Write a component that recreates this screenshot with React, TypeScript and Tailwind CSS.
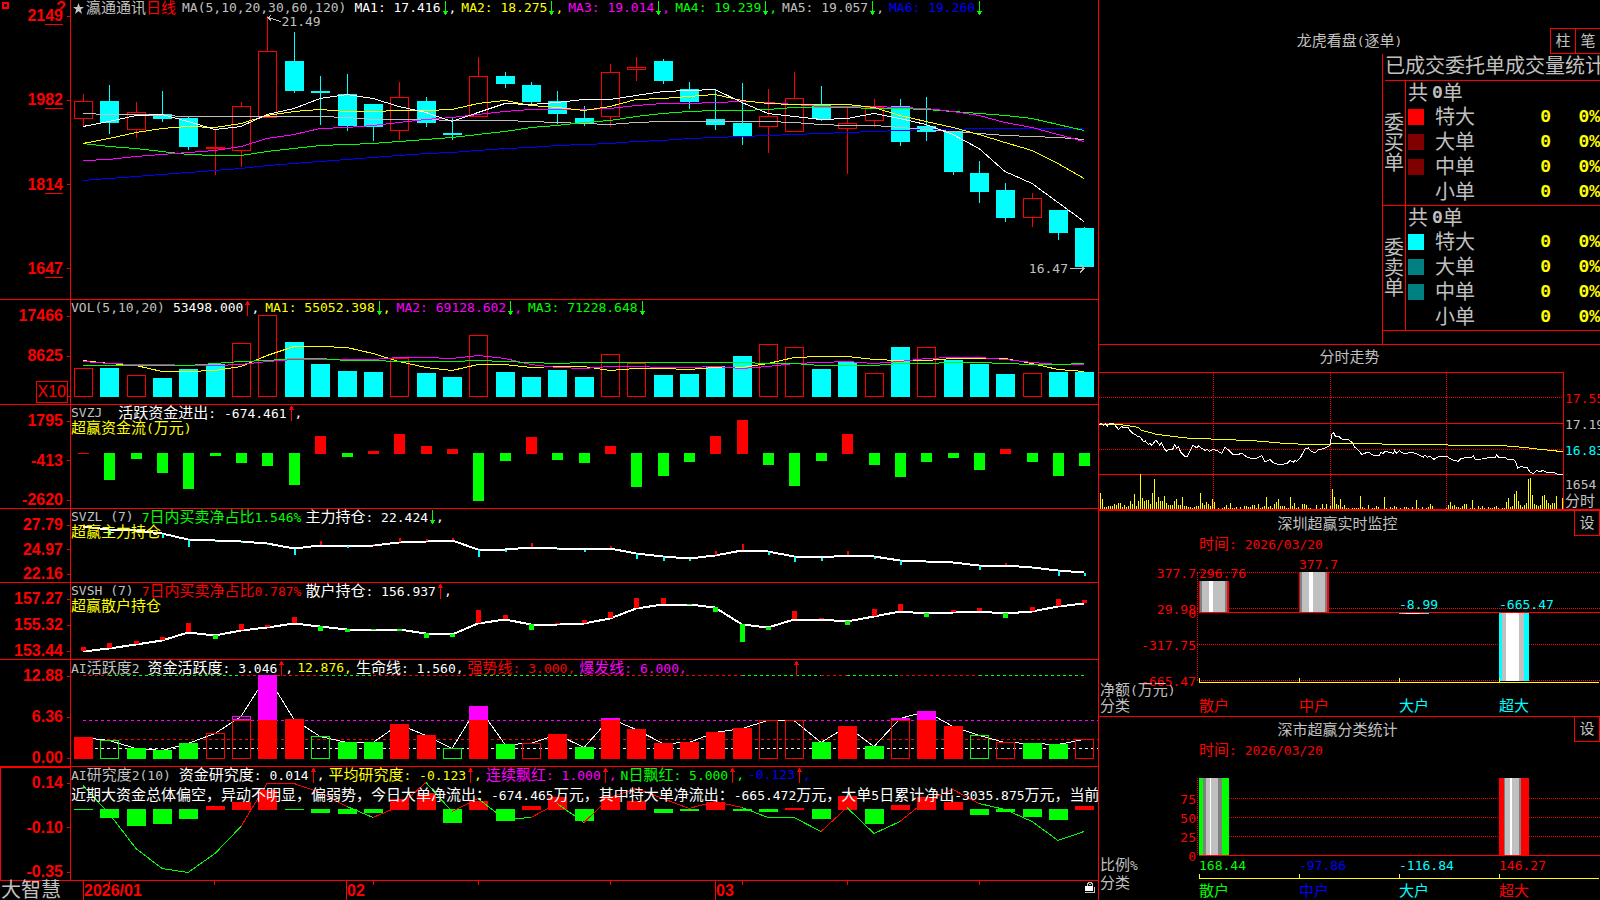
import type { ReactNode } from "react";

const RED = "#ff0000";
const GREEN = "#00ff00";
const CYAN = "#00ffff";
const YELLOW = "#ffff00";
const MAGENTA = "#ff00ff";
const SILVER = "#c0c0c0";
const BLUE = "#0000ff";
const WHITE = "#ffffff";

const FONT = "font-['DejaVu_Sans_Mono','Noto_Sans_CJK_SC',monospace]";
const AXIS_FONT = "font-['Liberation_Sans','Noto_Sans_CJK_SC',sans-serif]";

// center of the n-th trading day
const cx = (i: number) => Math.round(83 + 26.35 * i);

type Point = [number, number];

const CANDLES: [string, number, number, number, number][] = [
  // direction, high, body top, body bottom, low
  ["u", 94, 101, 118, 127],
  ["d", 85, 101, 123, 134],
  ["u", 102, 112, 129, 138],
  ["d", 91, 114, 119, 122],
  ["d", 117, 118, 147, 150],
  ["u", 129, 147, 148, 175],
  ["u", 102, 106, 150, 167],
  ["u", 16, 51, 117, 117],
  ["d", 32, 61, 91, 93],
  ["d", 76, 91, 93, 125],
  ["d", 74, 94, 126, 131],
  ["d", 104, 104, 127, 141],
  ["u", 82, 97, 130, 140],
  ["d", 97, 101, 123, 127],
  ["d", 118, 133, 135, 140],
  ["u", 57, 76, 116, 116],
  ["d", 72, 76, 84, 88],
  ["d", 82, 85, 102, 105],
  ["d", 91, 101, 114, 124],
  ["d", 106, 118, 124, 126],
  ["u", 64, 72, 116, 127],
  ["u", 57, 67, 69, 81],
  ["d", 59, 61, 81, 84],
  ["d", 82, 89, 102, 109],
  ["d", 89, 119, 125, 130],
  ["d", 83, 123, 136, 145],
  ["u", 89, 116, 126, 153],
  ["u", 72, 98, 131, 131],
  ["d", 86, 105, 119, 121],
  ["u", 107, 123, 128, 174],
  ["u", 99, 107, 120, 127],
  ["d", 99, 106, 142, 146],
  ["d", 97, 126, 132, 141],
  ["d", 131, 131, 172, 175],
  ["d", 161, 173, 192, 203],
  ["d", 183, 190, 218, 222],
  ["u", 193, 198, 217, 227],
  ["d", 210, 210, 233, 240],
  ["d", 227, 228, 267, 267],
];

const MA5 = [126, 121, 115, 114, 121, 129, 126, 114, 108, 98, 94, 98, 106, 112, 121, 112, 103, 104, 102, 99, 99, 95, 91, 90, 89, 102, 113, 116, 119, 118, 113, 118, 124, 134, 148, 171, 183, 202, 221];
const MA10 = [143, 138, 132, 128, 126, 127, 123, 115, 111, 109, 111, 111, 110, 110, 109, 103, 100, 105, 107, 110, 106, 99, 98, 96, 94, 100, 103, 104, 104, 104, 107, 115, 121, 127, 134, 142, 150, 163, 178];
const MA20 = [160, 159, 156, 154, 152, 150, 146, 138, 134, 128, 127, 125, 122, 119, 117, 114, 111, 109, 109, 109, 108, 105, 103, 103, 102, 101, 102, 104, 106, 106, 106, 107, 108, 111, 115, 122, 127, 134, 141];
const MA30 = [143, 146, 148, 151, 154, 155, 155, 151, 148, 145, 144, 143, 141, 139, 137, 134, 131, 127, 125, 122, 120, 116, 113, 111, 110, 110, 109, 107, 107, 107, 108, 108, 109, 111, 113, 115, 118, 124, 130];
const MA60 = [113, 114, 114, 115, 116, 116, 116, 116, 116, 116, 117, 119, 119, 119, 120, 120, 120, 121, 122, 123, 124, 122, 121, 121, 121, 121, 121, 122, 124, 125, 125, 127, 129, 131, 133, 135, 136, 137, 139];
const MA120 = [180, 178, 176, 174, 172, 170, 168, 165, 163, 161, 159, 157, 155, 153, 152, 150, 148, 147, 145, 144, 143, 141, 140, 138, 137, 136, 135, 134, 133, 132, 131, 130, 129, 129, 128, 128, 128, 128, 128];

const VOLUME = [368, 368, 375, 378, 369, 364, 343, 315, 342, 364, 371, 372, 358, 373, 377, 335, 372, 377, 370, 377, 354, 363, 375, 374, 366, 356, 344, 347, 369, 362, 373, 347, 347, 360, 364, 374, 373, 372, 372];
// volume bars are hollow on these days
const VOLUME_UP = [0, 2, 6, 7, 12, 15, 20, 21, 26, 27, 30, 32, 36];
const VMA5 = [360, 363, 365, 371, 371, 370, 366, 355, 346, 346, 347, 353, 361, 367, 370, 364, 364, 367, 366, 366, 370, 368, 368, 369, 367, 367, 363, 357, 356, 356, 359, 360, 360, 358, 358, 358, 363, 369, 371];
const VMA10 = [361, 363, 364, 364, 365, 365, 364, 361, 359, 359, 359, 359, 357, 357, 358, 355, 358, 364, 367, 368, 366, 366, 367, 367, 366, 368, 366, 363, 362, 361, 363, 361, 358, 357, 357, 359, 362, 364, 364];
const VMA20 = [365, 365, 365, 365, 365, 363, 361, 360, 358, 358, 360, 360, 361, 361, 361, 360, 361, 362, 363, 362, 362, 362, 362, 362, 362, 362, 363, 363, 365, 365, 365, 363, 363, 362, 362, 363, 364, 364, 363];

const FLOW = [1, -27, -6, -20, -36, -3, -10, -13, -32, 18, -4, 3, 20, 8, 5, -48, -8, 17, -7, -10, 8, -34, -23, -9, 18, 34, -12, -33, -8, 20, -12, -24, -9, -5, -17, 5, -9, -23, -13];

const MAIN_HOLD = [526, 529, 530, 533, 539, 540, 541, 543, 548, 545, 545, 545, 542, 541, 540, 549, 549, 547, 548, 549, 548, 553, 556, 558, 555, 550, 551, 556, 557, 555, 556, 560, 561, 562, 565, 565, 567, 570, 572];
const MAIN_TICKS = [2, -5, 0, -4, -7, -1, -1, -1, -6, 4, -2, 1, 4, 2, 2, -7, -2, 4, -1, -2, 2, -5, -4, -2, 4, 6, -3, -5, -3, 4, -2, -4, -1, 0, -4, 2, -1, -5, -3];

const RETAIL_HOLD = [651, 648, 644, 640, 632, 635, 630, 627, 623, 626, 629, 629, 629, 633, 634, 623, 619, 624, 624, 623, 618, 608, 604, 604, 607, 624, 627, 619, 619, 621, 616, 611, 613, 612, 611, 613, 611, 606, 603];
const RETAIL_TICKS = [4, 5, 3, 3, 9, -4, 6, 2, 6, -5, -3, -1, -2, -5, -3, 13, 4, -6, 1, 3, 6, 10, 6, -1, -5, -18, -3, 8, 1, -4, 7, 7, -4, 2, 3, -5, 4, 7, 3];

const ACTIVE: [string, number, number?][] = [
  // fill (upper case: solid), top, top of the magenta part
  ["R", 737], ["g", 740], ["G", 748], ["G", 750], ["G", 743], ["r", 733], ["r", 720, 716],
  ["R", 720, 675], ["R", 719, 719], ["g", 736], ["G", 742], ["G", 742], ["R", 724], ["R", 735],
  ["g", 748], ["R", 720, 706], ["G", 744], ["r", 743], ["R", 734], ["G", 747], ["R", 720, 718],
  ["R", 729], ["R", 743], ["R", 742], ["R", 732], ["R", 728], ["r", 720], ["r", 720],
  ["G", 742], ["R", 726], ["G", 746], ["r", 720, 718], ["R", 720, 711], ["R", 726], ["g", 735],
  ["r", 742], ["G", 743], ["G", 744], ["r", 739],
];
const TOP_DASHES: [number, number, string][] = [
  [0, 1, RED], [1, 6, GREEN], [6, 9, RED], [9, 11, GREEN], [11, 15, RED], [15, 19, GREEN],
  [19, 25, RED], [25, 28, GREEN], [28, 29, RED], [29, 31, GREEN], [31, 34, RED], [34, 38, GREEN],
];

const STUDY = [-1, -9, -17, -15, -10, 4, 8, 20, -1, -4, -5, -4, 11, 17, -14, 9, -12, 4, 13, -12, 14, 9, -4, -2, 8, -2, -3, 2, -10, 14, -15, 5, 13, 8, -6, -3, -8, -11, 4];
const STUDY_LINE = [785, 813, 848, 868, 872, 853, 826, 783, 783, 792, 806, 817, 806, 782, 811, 798, 819, 817, 803, 822, 797, 788, 798, 808, 801, 807, 817, 817, 831, 807, 833, 821, 800, 789, 803, 809, 821, 840, 831];
const STUDY_COLORS = "GGGGGGRRRRGRRGRGGRGRRRRRRGGGRGGRRRGGGG";

const line = (ys: number[]) => ys.map((y, i) => `${cx(i)},${y + 0.5}`).join(" ");

function Curve({ ys, color, width = 1 }: { ys: number[]; color: string; width?: number }) {
  return <polyline points={line(ys)} fill="none" stroke={color} strokeWidth={width} />;
}

function Bar({ x, y, w, h, color, hollow }: { x: number; y: number; w: number; h: number; color: string; hollow?: boolean }) {
  if (hollow) {
    return <rect x={x + 0.5} y={y + 0.5} width={w - 1} height={Math.max(h - 1, 1)} fill="none" stroke={color} />;
  }
  return <rect x={x} y={y} width={w} height={h} fill={color} />;
}

/* Chinese runs are set larger than digits and latin letters */
function T({ children, className = "" }: { children: string; className?: string }) {
  const runs = children.split(/([\u3000-\u9fff\uff00-\uffef]+)/).filter(Boolean);
  return (
    <span className={`whitespace-pre ${className}`}>
      {runs.map((r, i) =>
        /[\u3000-\uffef]/.test(r) ? (
          <span key={i} className="text-[15px]">{r}</span>
        ) : (
          r
        )
      )}
    </span>
  );
}

function Arrow({ up }: { up?: boolean }) {
  return (
    <svg width="8" height="15" viewBox="0 0 8 15" className="shrink-0" shapeRendering="crispEdges">
      {up ? (
        <path d="M4 0H5V1H6V3H7V4H5V15H4V4H2V3H3V1H4Z" fill={RED} />
      ) : (
        <path d="M4 0H5V10H7V11H6V13H5V14H4V13H3V11H2V10H4Z" fill={GREEN} />
      )}
    </svg>
  );
}

function Item({ text, arrow, end = ",", className }: { text: string; arrow?: "up" | "down"; end?: string; className: string }) {
  return (
    <span className={`flex shrink-0 items-center ${className}`}>
      <T>{text}</T>
      {arrow && <Arrow up={arrow === "up"} />}
      {end && <T>{end}</T>}
    </span>
  );
}

function Axis({ labels, underline, selected, children }: { labels: string[]; underline?: boolean; selected?: boolean; children?: ReactNode }) {
  return (
    <div
      className={`relative flex w-[71px] shrink-0 flex-col justify-between border-r border-[#ff0000] text-right text-base font-bold leading-4 text-[#ff0000] ${AXIS_FONT} ${
        underline ? "pb-[22px]" : ""
      } ${selected ? "border-l border-t pt-[7px]" : "pt-2"}`}
    >
      {labels.map((l, i) => (
        <div key={i} className="flex h-4 items-center justify-end gap-1">
          {underline ? (
            <span>
              {l.slice(0, 2)}
              <span className="border-b border-[#ff0000]">{l.slice(2)}</span>
            </span>
          ) : (
            <span>{l}</span>
          )}
          <span className="w-[3px] border-t border-[#ff0000]" />
        </div>
      ))}
      {children}
    </div>
  );
}

function Panel({ axis, top, height, header, chart, children }: { axis: ReactNode; top: number; height: number; header: ReactNode; chart: ReactNode; children?: ReactNode }) {
  return (
    <section className="flex min-h-0 overflow-hidden border-b border-[#ff0000]">
      {axis}
      <div className="relative min-w-0 flex-1 overflow-hidden">
        <svg
          className="absolute inset-0 h-full w-full"
          viewBox={`71 ${top} 1027 ${height}`}
          preserveAspectRatio="none"
          shapeRendering="crispEdges"
        >
          {chart}
        </svg>
        <div className="relative flex h-4 items-center gap-1 overflow-hidden">{header}</div>
        {children}
      </div>
    </section>
  );
}

function KLine() {
  return (
    <Panel
      top={0}
      height={299}
      axis={
        <Axis labels={["2149", "1982", "1814", "1647"]} underline>
          <span className="absolute left-[2px] top-[2px] h-[7px] w-[7px] border-2 border-[#ff0000]" />
          <button className="absolute right-1 top-0 font-bold leading-4" aria-label="help">?</button>
        </Axis>
      }
      header={
        <>
          <span className="flex items-center text-[#c0c0c0]">
            <svg width="11" height="11" viewBox="0 0 11 11" className="mx-0.5"><path d="M5.500 0L7 4H11L7.800 6.500L9 11L5.500 8.200L2 11L3.200 6.500L0 4H4Z" fill={SILVER} /></svg>
            <T>瀛通通讯</T>
            <T className="text-[#ff0000]">日线</T>
          </span>
          <T className="ml-0.5 mr-1 text-[#c0c0c0]">MA(5,10,20,30,60,120)</T>
          <div className="flex gap-[5px]">
            <Item text="MA1: 17.416" arrow="down" className="text-white" />
            <Item text="MA2: 18.275" arrow="down" className="text-[#ffff00]" />
            <Item text="MA3: 19.014" arrow="down" className="text-[#ff00ff]" />
            <Item text="MA4: 19.239" arrow="down" className="text-[#00ff00]" />
            <Item text="MA5: 19.057" arrow="down" className="text-[#c0c0c0]" />
            <Item text="MA6: 19.260" arrow="down" end="" className="text-[#0000ff]" />
          </div>
        </>
      }
      chart={
        <>
          {CANDLES.map(([dir, high, top, bottom, low], i) => {
            const x = cx(i);
            const color = dir === "u" ? RED : CYAN;
            return (
              <g key={i}>
                <path d={`M${x + 0.5} ${high}V${top}M${x + 0.5} ${bottom}V${low}`} stroke={color} />
                <Bar x={x - 9} y={top} w={19} h={dir === "u" ? bottom - top + 1 : bottom - top} color={color} hollow={dir === "u"} />
              </g>
            );
          })}
          <Curve ys={MA120} color={BLUE} />
          <Curve ys={MA60} color={SILVER} />
          <Curve ys={MA30} color={GREEN} />
          <Curve ys={MA20} color={MAGENTA} />
          <Curve ys={MA10} color={YELLOW} />
          <Curve ys={MA5} color={WHITE} />
          <path d="M281 21.500L268 17.500M271 15.500L268 17.500L271 20.500" stroke={SILVER} fill="none" />
          <path d="M1070 268.500H1084M1080 264.500L1084 268.500L1080 272.500" stroke={SILVER} fill="none" />
        </>
      }
    >
      <T className="absolute left-[20.5%] top-[14px] text-[#c0c0c0]">21.49</T>
      <T className="absolute right-[30px] top-[261px] text-[#c0c0c0]">16.47</T>
    </Panel>
  );
}

function Volume() {
  return (
    <Panel
      top={300}
      height={104}
      axis={
        <Axis labels={["17466", "8625", ""]}>
          <span className="absolute bottom-[1px] right-[2px] border border-[#ff0000] px-px py-[2px] font-normal">X10</span>
        </Axis>
      }
      header={
        <>
          <T className="mr-1 text-[#c0c0c0]">VOL(5,10,20)</T>
          <div className="flex gap-1.5">
            <Item text="53498.000" arrow="up" className="text-white" />
            <Item text="MA1: 55052.398" arrow="down" className="text-[#ffff00]" />
            <Item text="MA2: 69128.602" arrow="down" className="text-[#ff00ff]" />
            <Item text="MA3: 71228.648" arrow="down" end="" className="text-[#00ff00]" />
          </div>
        </>
      }
      chart={
        <>
          {VOLUME.map((y, i) => {
            const up = VOLUME_UP.includes(i);
            return <Bar key={i} x={cx(i) - 9} y={y} w={19} h={397 - y} color={up ? RED : CYAN} hollow={up} />;
          })}
          <Curve ys={VMA5} color={YELLOW} />
          <Curve ys={VMA10} color={MAGENTA} />
          <Curve ys={VMA20} color={GREEN} />
        </>
      }
    />
  );
}

function MoneyFlow() {
  return (
    <Panel
      top={405}
      height={103}
      axis={<Axis labels={["1795", "-413", "-2620"]} />}
      header={
        <>
          <T className="mr-3 text-[#c0c0c0]">SVZJ</T>
          <Item text="活跃资金进出: -674.461" arrow="up" className="text-white" />
        </>
      }
      chart={FLOW.map((v, i) => (
        <Bar key={i} x={cx(i) - 5} y={v > 0 ? 454 - v : 453} w={11} h={Math.abs(v)} color={v > 0 ? RED : GREEN} />
      ))}
    >
      <div className="relative leading-[15px] text-[#ffff00]"><T>超赢资金流(万元)</T></div>
    </Panel>
  );
}

function MainHolding() {
  return (
    <Panel
      top={509}
      height={73}
      axis={<Axis labels={["27.79", "24.97", "22.16"]} />}
      header={
        <>
          <T className="mr-1 text-[#c0c0c0]">SVZL (7)</T>
          <T className="text-[#00ff00]">7日内买卖净占比1.546%</T>
          <Item text="主力持仓: 22.424" arrow="down" className="text-white" />
        </>
      }
      chart={
        <>
          <Curve ys={MAIN_HOLD} color={WHITE} width={2} />
          {MAIN_TICKS.map((v, i) => (
            <Bar key={i} x={cx(i)} y={v > 0 ? MAIN_HOLD[i] - v : MAIN_HOLD[i] + 1} w={2} h={Math.abs(v)} color={v > 0 ? RED : CYAN} />
          ))}
        </>
      }
    >
      <div className="relative leading-[15px] text-[#ffff00]"><T>超赢主力持仓</T></div>
    </Panel>
  );
}

function RetailHolding() {
  return (
    <Panel
      top={583}
      height={76}
      axis={<Axis labels={["157.27", "155.32", "153.44"]} />}
      header={
        <>
          <T className="mr-1 text-[#c0c0c0]">SVSH (7)</T>
          <T className="text-[#ff0000]">7日内买卖净占比0.787%</T>
          <Item text="散户持仓: 156.937" arrow="up" className="text-white" />
        </>
      }
      chart={
        <>
          <Curve ys={RETAIL_HOLD} color={WHITE} width={2} />
          {RETAIL_TICKS.map((v, i) => (
            <Bar key={i} x={cx(i) - 2} y={v > 0 ? RETAIL_HOLD[i] - v : RETAIL_HOLD[i]} w={5} h={Math.abs(v)} color={v > 0 ? RED : GREEN} />
          ))}
        </>
      }
    >
      <div className="relative leading-[15px] text-[#ffff00]"><T>超赢散户持仓</T></div>
    </Panel>
  );
}

function Activity() {
  return (
    <Panel
      top={660}
      height={106}
      axis={<Axis labels={["12.88", "6.36", "0.00"]} />}
      header={
        <>
          <T className="mr-1 text-[#c0c0c0]">AI活跃度2</T>
          <Item text="资金活跃度: 3.046" arrow="up" className="text-white" />
          <Item text="12.876" className="text-[#ffff00]" />
          <Item text="生命线: 1.560" className="text-white" />
          <Item text="强势线: 3.000" className="text-[#ff0000]" />
          <Item text="爆发线: 6.000" className="text-[#ff00ff]" />
          <span className="ml-[101px] flex"><Arrow up /></span>
        </>
      }
      chart={
        <>
          {TOP_DASHES.map(([a, b, color]) => (
            <path key={a} d={`M${cx(a)} 675.500H${cx(b)}`} stroke={color} strokeDasharray="3 3" />
          ))}
          <path d="M83 720.500H1098" stroke={MAGENTA} strokeDasharray="3 3" />
          <path d="M83 739.500H1098" stroke={RED} strokeDasharray="3 3" />
          <path d="M83 748.500H1098" stroke={WHITE} strokeDasharray="3 3" />
          <Curve ys={ACTIVE.map(([, top, peak]) => peak ?? top)} color={WHITE} />
          {ACTIVE.map(([kind, top, peak], i) => {
            const hollow = kind === kind.toLowerCase();
            const color = kind.toUpperCase() === "R" ? RED : GREEN;
            return (
              <g key={i}>
                {peak && <Bar x={cx(i) - 9} y={peak} w={19} h={Math.max(top - peak, 1)} color={MAGENTA} hollow={hollow} />}
                <Bar x={cx(i) - 9} y={top} w={19} h={759 - top} color={color} hollow={hollow} />
              </g>
            );
          })}
        </>
      }
    />
  );
}

function Study() {
  return (
    <Panel
      top={767}
      height={113}
      axis={<Axis labels={["0.14", "-0.10", "-0.35"]} selected />}
      header={
        <>
          <T className="mr-1 text-[#c0c0c0]">AI研究度2(10)</T>
          <Item text="资金研究度: 0.014" arrow="up" className="text-white" />
          <Item text="平均研究度: -0.123" arrow="up" className="text-[#ffff00]" />
          <Item text="连续飘红: 1.000" arrow="up" className="text-[#ff00ff]" />
          <Item text="N日飘红: 5.000" arrow="up" className="text-[#00ff00]" />
          <Item text="-0.123" arrow="up" className="text-[#0000ff]" />
        </>
      }
      chart={
        <>
          {STUDY.map((v, i) => (
            <Bar key={i} x={cx(i) - 9} y={v > 0 ? 810 - v : 809} w={19} h={Math.abs(v)} color={v > 0 ? RED : GREEN} />
          ))}
          {STUDY_COLORS.split("").map((c, i) => (
            <path
              key={i}
              d={`M${cx(i)} ${STUDY_LINE[i] + 0.5}L${cx(i + 1)} ${STUDY_LINE[i + 1] + 0.5}`}
              stroke={c === "R" ? RED : GREEN}
            />
          ))}
        </>
      }
    >
      <p className="relative mt-1 overflow-hidden whitespace-nowrap leading-4 text-white">
        <T>近期大资金总体偏空，异动不明显，偏弱势，今日大单净流出：-674.465万元，其中特大单净流出：-665.472万元，大单5日累计净出-3035.875万元，当前</T>
      </p>
    </Panel>
  );
}

const MONTHS: [number, string][] = [[83, "2026/01"], [346, "02"], [715, "03"]];
const WEEKS = [109, 214, 373, 478, 610, 742, 847, 979];

function TimeAxis() {
  return (
    <footer className="flex min-h-0">
      <div className={`w-[71px] shrink-0 pl-px text-xl leading-[19px] text-[#c0c0c0] ${FONT}`}>大智慧</div>
      <div className={`relative min-w-0 flex-1 text-base leading-[19px] text-[#ff0000] ${AXIS_FONT}`}>
        <svg className="absolute inset-0 h-full w-full" viewBox="71 881 1027 19" preserveAspectRatio="none" shapeRendering="crispEdges">
          {MONTHS.map(([x]) => <path key={x} d={`M${x + 0.5} 881V900`} stroke={RED} />)}
          {WEEKS.map((x) => <path key={x} d={`M${x + 0.5} 881V885`} stroke={RED} />)}
        </svg>
        {MONTHS.map(([x, label]) => (
          <span key={x} className="absolute top-0 font-bold" style={{ left: `${((x - 70) / 1027) * 100}%` }}>{label}</span>
        ))}
        <svg className="absolute right-[2px] top-[1px]" width="11" height="11" viewBox="0 0 11 11" shapeRendering="crispEdges">
          <path d="M2.500 4V1.500H3.500V0.500H6.500V1.500H7.500V4" stroke={SILVER} fill="none" />
          <path d="M4 2.500H6" stroke={SILVER} />
          <rect x="0" y="4" width="8" height="5" fill={WHITE} />
          <path d="M0 10.500H9.500V5" stroke={SILVER} fill="none" />
        </svg>
      </div>
    </footer>
  );
}

const ORDER_GROUPS = [
  { name: "委买单", swatches: ["bg-[#ff0000]", "bg-[#800000]", "bg-[#800000]", ""] },
  { name: "委卖单", swatches: ["bg-[#00ffff]", "bg-[#008080]", "bg-[#008080]", ""] },
];
const ORDER_ROWS = ["特大", "大单", "中单", "小单"];

function OrderBook() {
  return (
    <section className="flex min-h-0 flex-col border-b border-[#ff0000]">
      <div className="relative flex h-[54px] shrink-0 items-end justify-center pb-[3px] text-[#c0c0c0]">
        <h2 className="leading-[18px]"><T>龙虎看盘(逐单)</T></h2>
        <div className="absolute bottom-0 right-0 flex h-[26px] border-y border-l border-[#ff0000]">
          <button className="w-[25px] border-r border-[#ff0000]"><T>柱</T></button>
          <button className="w-6"><T>笔</T></button>
        </div>
      </div>
      <div className="ml-auto w-[218px] flex-1 overflow-hidden border-l border-[#ff0000] text-xl text-[#c0c0c0]">
        <h3 className="ml-0.5 h-[27px] whitespace-nowrap border-b border-[#ff0000] leading-[25px]">已成交委托单成交量统计</h3>
        <table className="w-full table-fixed border-separate border-spacing-0 leading-5">
          <colgroup>
            <col className="w-[23px]" />
            <col className="w-[29px]" />
            <col />
            <col className="w-[39px]" />
            <col className="w-[49px]" />
          </colgroup>
          {ORDER_GROUPS.map((g) => (
            <tbody key={g.name}>
              <tr>
                <th rowSpan={5} scope="rowgroup" className="border-b border-r border-[#ff0000] p-0 text-center align-middle font-normal">
                  {g.name.split("").map((c) => <span key={c} className="block">{c}</span>)}
                </th>
                <td colSpan={4} className="h-6 p-0 pl-[2px]">
                  <span className="flex items-center">
                    共<b className="pl-1 font-['Liberation_Mono'] text-lg leading-5">0</b>单
                  </span>
                </td>
              </tr>
              {ORDER_ROWS.map((r, i) => {
                const edge = i === 3 ? "h-[26px] border-b border-[#ff0000]" : "h-[25px]";
                return (
                  <tr key={r}>
                    <td className={`p-0 pb-0.5 pl-[2px] ${edge}`}>
                      <span className={`block h-4 w-4 ${g.swatches[i]}`} />
                    </td>
                    <td className={`p-0 pb-0.5 ${edge}`}>{r}</td>
                    <td className={`p-0 pb-0.5 text-right font-['Liberation_Mono'] text-lg font-bold leading-5 text-[#ffff00] ${edge}`}>0</td>
                    <td className={`p-0 pb-0.5 text-right font-['Liberation_Mono'] text-lg font-bold leading-5 text-[#ffff00] ${edge}`}>0%</td>
                  </tr>
                );
              })}
            </tbody>
          ))}
        </table>
      </div>
    </section>
  );
}

// minute chart, three units to a pixel
const PRICE: Point[] = [
  [27, 253], [34, 250], [40, 257], [46, 252], [52, 258], [58, 250], [70, 250], [78, 259], [85, 268], [95, 260], [105, 264], [114, 262],
  [120, 272], [130, 281], [142, 288], [150, 290], [160, 304], [166, 303], [175, 313], [180, 309], [185, 317], [197, 301], [204, 308], [209, 315], [214, 309],
  [222, 325], [230, 333], [240, 327], [248, 328], [254, 314], [260, 326], [265, 320], [272, 336], [285, 350], [293, 348], [300, 332],
  [308, 316], [320, 323], [326, 318], [332, 323], [345, 331], [352, 328], [358, 334], [370, 328], [382, 332], [395, 341], [405, 322],
  [418, 332], [430, 345], [445, 343], [456, 340], [470, 351], [490, 357], [505, 353], [515, 346], [525, 366], [540, 359], [550, 368],
  [565, 374], [590, 371], [600, 361], [610, 367], [616, 361], [620, 364], [630, 355], [645, 327], [655, 324], [664, 335], [676, 338], [685, 329],
  [700, 326], [710, 322], [718, 318], [722, 310], [724, 284], [730, 277], [736, 288], [748, 290], [755, 297], [775, 299], [785, 306],
  [795, 322], [806, 331], [815, 343], [835, 336], [850, 346], [868, 346], [872, 337], [880, 341], [884, 334], [900, 337], [910, 340],
  [914, 331], [920, 340], [928, 332], [940, 340], [970, 338], [985, 344], [1000, 351], [1005, 345], [1012, 352], [1020, 349],
  [1032, 358], [1044, 351], [1060, 350], [1070, 348], [1080, 356], [1092, 361], [1104, 364], [1112, 356], [1118, 357], [1125, 351],
  [1145, 353], [1150, 346], [1156, 358], [1175, 357], [1200, 352], [1216, 352], [1220, 344], [1226, 352], [1245, 352], [1256, 360],
  [1268, 358], [1276, 363], [1283, 384], [1294, 380], [1312, 383], [1320, 396], [1330, 401], [1340, 391], [1350, 396], [1358, 391], [1370, 397],
  [1394, 398], [1400, 402], [1419, 403],
];
const AVERAGE: Point[] = [
  [27, 252], [90, 254], [120, 258], [145, 262], [155, 271], [200, 283], [240, 288], [290, 294], [410, 299],
  [490, 302], [570, 309], [640, 313], [720, 313], [724, 311], [870, 311], [880, 313], [1070, 314], [1080, 316],
  [1240, 317], [1310, 323], [1350, 328], [1419, 335],
];
const MINUTE_VOLUME = [
  16, 10, 2, 2, 3, 3, 3, 5, 4, 6, 6, 2, 4, 2, 3, 8, 5, 15, 3, 8, 35, 11, 8, 9, 9, 5, 16, 30, 7, 12, 8, 8, 13, 6, 4, 4,
  4, 8, 10, 4, 4, 12, 3, 3, 2, 2, 1, 2, 3, 3, 16, 6, 4, 7, 5, 3, 10, 7, 0, 1, 0, 1, 2, 4, 1, 6, 1, 1, 2, 0,
  2, 0, 3, 3, 2, 2, 4, 4, 1, 5, 1, 2, 3, 12, 2, 3, 1, 5, 7, 10, 3, 3, 3, 1, 1, 12, 3, 6, 1, 2, 0, 5, 5, 4,
  1, 1, 0, 0, 4, 0, 1, 5, 1, 5, 0, 3, 20, 12, 5, 4, 10, 2, 4, 1, 1, 0, 1, 1, 1, 1, 13, 2, 1, 0, 4, 0, 1, 1,
  3, 2, 0, 0, 12, 1, 0, 2, 1, 3, 2, 0, 1, 0, 2, 2, 1, 0, 2, 0, 9, 1, 0, 2, 0, 1, 2, 5, 3, 0, 0, 0, 0, 0,
  0, 1, 4, 7, 3, 4, 2, 2, 1, 3, 5, 5, 0, 1, 9, 1, 0, 3, 1, 3, 1, 0, 2, 1, 1, 2, 3, 1, 0, 1, 1, 7, 11, 2,
  3, 15, 18, 8, 4, 2, 4, 6, 30, 31, 14, 5, 4, 3, 4, 13, 14, 9, 6, 4, 6, 6, 13, 0, 0, 11,
];

function Minute() {
  const pts = (p: Point[]) => p.map(([x, y]) => `${1090 + x / 3},${340 + y / 3}`).join(" ");
  return (
    <section className="flex min-h-0 flex-col overflow-hidden border-b-2 border-[#ff0000]">
      <h2 className="h-[27px] shrink-0 text-center leading-[25px] text-[#c0c0c0]"><T>分时走势</T></h2>
      <svg className="min-h-0 w-full flex-1" viewBox="1099 372 501 137" preserveAspectRatio="xMinYMin meet" shapeRendering="crispEdges" fontSize="13">
        <path d="M1099 372.500H1563.500V509M1099 423.500H1563M1099 474.500H1563" stroke={RED} fill="none" />
        <path d="M1099 397.500H1563M1099 449.500H1563M1213.500 373V509M1330.500 373V509M1446.500 373V509" stroke={RED} strokeDasharray="1 1" fill="none" />
        {MINUTE_VOLUME.map((h, i) => <rect key={i} x={1100 + i * 2} y={509 - h} width="1" height={h} fill={YELLOW} />)}
        <polyline points={pts(AVERAGE)} stroke={YELLOW} fill="none" />
        <polyline points={pts(PRICE)} stroke={WHITE} fill="none" />
        <text x="1565" y="403" fill={RED}>17.55</text>
        <text x="1565" y="429" fill={SILVER}>17.19</text>
        <text x="1565" y="455" fill={CYAN}>16.83</text>
        <text x="1565" y="489" fill={SILVER}>1654</text>
        <text x="1565" y="506" fill={SILVER} fontSize="15">分时</text>
      </svg>
    </section>
  );
}

type Stripe = [number, string];
const GRAY = "#808080";
const GROUPS = ["散户", "中户", "大户", "超大"];

function Cylinder({ x, y, h, stripes }: { x: number; y: number; h: number; stripes: Stripe[] }) {
  let at = x;
  return (
    <g>
      {stripes.map(([w, color], i) => {
        const left = at;
        at += w;
        return <rect key={i} x={left} y={y} width={w} height={h} fill={color} />;
      })}
    </g>
  );
}

function StatPanel({ title, top, height, children }: { title: string; top: number; height: number; children: ReactNode }) {
  return (
    <section className="relative min-h-0 overflow-hidden">
      <svg className="absolute inset-0 h-full w-full" viewBox={`1099 ${top} 501 ${height}`} preserveAspectRatio="xMinYMin meet" shapeRendering="crispEdges" fontSize="13">
        {children}
      </svg>
      <h2 className="relative pt-1 text-center leading-[18px] text-[#c0c0c0]"><T className="mr-6">{title}</T></h2>
      <button className="absolute right-0 top-0 h-[25px] w-[26px] border-x border-b border-[#ff0000] text-[#c0c0c0]"><T>设</T></button>
      <p className="relative pl-[100px] leading-5 text-[#ff0000]"><T>时间: 2026/03/20</T></p>
    </section>
  );
}

const SOFT_RED: Stripe[] = [[1, RED], [2, GRAY], [7, SILVER], [4, WHITE], [12, SILVER], [2, GRAY], [2, RED]];
const SOFT_CYAN: Stripe[] = [[3, CYAN], [4, SILVER], [13, WHITE], [5, SILVER], [5, CYAN]];
const DEEP_GREEN: Stripe[] = [[4, GREEN], [3, GRAY], [4, SILVER], [1, WHITE], [7, SILVER], [4, GRAY], [7, GREEN]];
const DEEP_RED: Stripe[] = [[5, RED], [1, GRAY], [5, SILVER], [2, WHITE], [7, SILVER], [2, GRAY], [8, RED]];

function LiveMonitor() {
  return (
    <div className="grid min-h-0 border-b border-[#ff0000]">
      <StatPanel title="深圳超赢实时监控" top={511} height={205}>
        <path d="M1197 572.500H1600M1197 608.500H1600M1197 644.500H1600M1197 680.500H1600M1197.500 573V680" stroke={RED} strokeDasharray="1 1" />
        <Cylinder x={1199} y={581} h={31} stripes={SOFT_RED} />
        <Cylinder x={1299} y={572} h={40} stripes={SOFT_RED} />
        <Cylinder x={1399} y={613} h={1} stripes={SOFT_CYAN} />
        <Cylinder x={1499} y={613} h={68} stripes={SOFT_CYAN} />
        <path d="M1199 612.500H1600" stroke={RED} />
        <path d="M1199.500 678V682.500H1599M1299.500 678V682M1399.500 678V682M1499.500 678V682" stroke={YELLOW} fill="none" />
        <g fill={RED} textAnchor="end">
          <text x="1196" y="578">377.7</text>
          <text x="1196" y="614">29.98</text>
          <text x="1196" y="618">0</text>
          <text x="1196" y="650">-317.75</text>
          <text x="1196" y="686">-665.47</text>
        </g>
        <text x="1199" y="578" fill={RED}>296.76</text>
        <text x="1299" y="569" fill={RED}>377.7</text>
        <text x="1399" y="609" fill={CYAN}>-8.99</text>
        <text x="1499" y="609" fill={CYAN}>-665.47</text>
        <g fontSize="15" fill={SILVER}>
          <text x="1100" y="695">净额<tspan fontSize="13">(</tspan>万元<tspan fontSize="13">)</tspan></text>
          <text x="1100" y="711">分类</text>
          {GROUPS.map((g, i) => <text key={g} x={1199 + i * 100} y="711" fill={i < 2 ? RED : CYAN}>{g}</text>)}
        </g>
      </StatPanel>
    </div>
  );
}

function MarketStats() {
  const colors = [GREEN, BLUE, CYAN, RED];
  const values = ["168.44", "-97.86", "-116.84", "146.27"];
  return (
    <StatPanel title="深市超赢分类统计" top={717} height={183}>
      <path d="M1197 798.500H1600M1197 817.500H1600M1197 836.500H1600M1197.500 778V855" stroke={RED} strokeDasharray="1 1" />
      <Cylinder x={1199} y={778} h={77} stripes={DEEP_GREEN} />
      <Cylinder x={1499} y={778} h={77} stripes={DEEP_RED} />
      <path d="M1199 855.500H1600" stroke={RED} />
      <path d="M1199.500 874V878.500H1599M1299.500 874V878M1399.500 874V878M1499.500 874V878" stroke={YELLOW} fill="none" />
      <g fill={RED} textAnchor="end">
        <text x="1196" y="804">75</text>
        <text x="1196" y="823">50</text>
        <text x="1196" y="842">25</text>
        <text x="1196" y="861">0</text>
      </g>
      {values.map((v, i) => <text key={v} x={1199 + i * 100} y="870" fill={colors[i]}>{v}</text>)}
      <g fontSize="15" fill={SILVER}>
        <text x="1100" y="870">比例<tspan fontSize="13">%</tspan></text>
        <text x="1100" y="888">分类</text>
        {GROUPS.map((g, i) => <text key={g} x={1199 + i * 100} y="896" fill={colors[i]}>{g}</text>)}
      </g>
    </StatPanel>
  );
}

export default function App() {
  return (
    <div className={`flex h-screen min-h-[600px] overflow-hidden bg-black text-[13px] leading-4 ${FONT}`}>
      {/* indicator panels */}
      <main className="grid min-w-0 flex-1 grid-rows-[300fr_105fr_104fr_74fr_77fr_107fr_114fr_19fr]">
        <KLine />
        <Volume />
        <MoneyFlow />
        <MainHolding />
        <RetailHolding />
        <Activity />
        <Study />
        <TimeAxis />
      </main>
      {/* order statistics */}
      <aside className="grid w-[502px] shrink-0 grid-rows-[345fr_166fr_206fr_183fr] border-l border-[#ff0000]">
        <OrderBook />
        <Minute />
        <LiveMonitor />
        <MarketStats />
      </aside>
    </div>
  );
}
